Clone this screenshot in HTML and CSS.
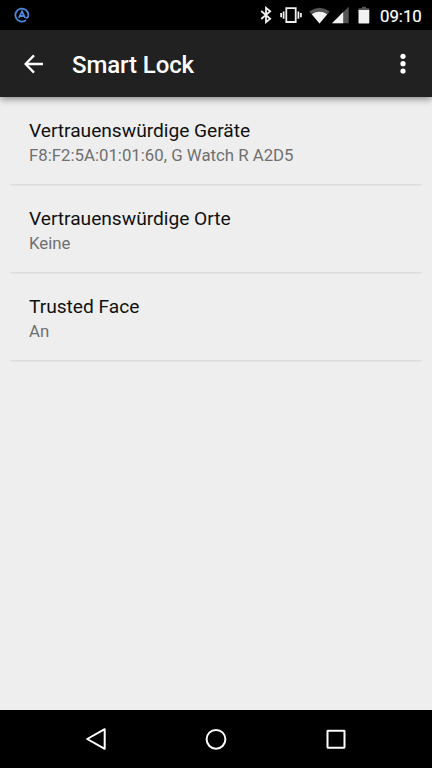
FILE: index.html
```html
<!DOCTYPE html>
<html lang="de">
<head>
<meta charset="utf-8">
<title>Smart Lock</title>
<link rel="stylesheet" href="styles.css">
</head>
<body>
<div class="status-bar">
  <svg class="notification" width="16" height="16" viewBox="0 0 16 16"><path d="M12 13.1A6.5 6.5 0 1 1 14.4 8.1C14.4 10.5 13 11 11.8 10.9M4.9 10.8L8 4.3L11.1 10.8M6 9H10"/></svg>
  <div class="status-icons">
    <svg width="12" height="18" viewBox="0 0 12 18"><path class="line" d="M1.2 5L10.2 12.8L6 16.2V1.8L10.2 5.2L1.2 13"/></svg>
    <svg class="vibrate" width="22" height="18" viewBox="0 0 22 18"><path class="line" d="M6.3 2.2H15.7V16H6.3ZM3.6 5.5V12.7M1.1 7V11.2M18.4 5.5V12.7M20.9 7V11.2"/></svg>
    <svg class="wifi" width="21" height="18" viewBox="0 0 21 18"><path class="dim" d="M.3 5.4Q10.5-1.7 20.7 5.4L10.5 17.5Z"/><path class="solid" d="M2.8 8.2Q10.5 3.4 18.2 8.2L10.5 17.5Z"/></svg>
    <svg class="signal" width="17" height="18" viewBox="0 0 17 18"><path class="dim" d="M0 17.3L16.7.8V17.3Z"/><path class="solid" d="M0 17.3L11.2 6.1V17.3Z"/></svg>
    <svg class="battery" width="12" height="18" viewBox="0 0 12 18"><path class="dim" d="M4 .7H8V2.3H11.3V5H.5V2.3H4Z"/><path class="solid" d="M.5 4H11.3V16.7Q11.3 17.4 10.6 17.4H1.2Q.5 17.4 .5 16.7Z"/></svg>
  </div>
  <span class="clock">09:10</span>
</div>
<header class="app-bar">
  <svg class="back" width="20" height="20" viewBox="0 0 20 20"><path d="M19 10H2M10 1.4L1.5 10L10 18.6"/></svg>
  <h1>Smart Lock</h1>
  <svg class="more" width="6" height="22" viewBox="0 0 6 22"><circle cx="3" cy="3.3" r="2.6"/><circle cx="3" cy="10.7" r="2.6"/><circle cx="3" cy="18" r="2.6"/></svg>
</header>
<main class="settings">
  <section class="item"><h2>Vertrauenswürdige Geräte</h2><p>F8:F2:5A:01:01:60, G Watch R A2D5</p></section>
  <section class="item"><h2>Vertrauenswürdige Orte</h2><p>Keine</p></section>
  <section class="item"><h2>Trusted Face</h2><p>An</p></section>
</main>
<nav class="nav-bar">
  <svg width="24" height="24" viewBox="0 0 24 24"><path d="M20.7 2.2V21.8L3.2 12Z"/></svg>
  <svg width="24" height="24" viewBox="0 0 24 24"><circle cx="12" cy="12.3" r="9.4"/></svg>
  <svg width="24" height="24" viewBox="0 0 24 24"><rect x="3.5" y="3.7" width="17" height="17" rx=".4"/></svg>
</nav>
</body>
</html>
```
FILE: styles.css
```css
* { box-sizing: border-box; }
body {
  margin: 0;
  width: 432px;
  height: 768px;
  display: flex;
  flex-direction: column;
  overflow: hidden;
  background: #eee;
  font-family: Roboto, sans-serif;
}
h1, h2, p { margin: 0; font-weight: 400; white-space: nowrap; }
svg { display: block; flex: none; }
.status-bar {
  height: 30px;
  flex: none;
  display: flex;
  align-items: center;
  padding: 0 10px 0 14px;
  background: #000;
  color: #fff;
}
.notification { fill: none; stroke: #4d87db; stroke-width: 1.8; }
.status-icons { display: flex; margin-left: auto; }
.line { fill: none; stroke: #eee; stroke-width: 1.8; }
.solid { fill: #f2f2f2; }
.dim { fill: #555; }
.vibrate { margin-left: 8px; }
.wifi { margin-left: 7px; }
.signal { margin-left: 2px; }
.battery { margin-left: 9px; }
.clock {
  width: 43px;
  margin-left: 10px;
  margin-right: -1px;
  padding-top: 1px;
  font-size: 16.8px;
  font-weight: 400;
  -webkit-text-stroke: .2px #fff;
  line-height: 20px;
}
.app-bar {
  position: relative;
  height: 67px;
  flex: none;
  display: flex;
  align-items: center;
  padding: 0 26px 0 24px;
  background: #212121;
  box-shadow: 0 2px 7px rgba(0, 0, 0, .45);
  color: #fff;
}
.back { fill: none; stroke: #fff; stroke-width: 2.3; }
.app-bar h1 {
  margin-left: 28px;
  padding-top: 2px;
  font-size: 24px;
  font-weight: 500;
  letter-spacing: -.1px;
  line-height: 30px;
}
.more { margin-left: auto; fill: #fff; }
.settings { flex: 1; padding: 0 10px; }
.item {
  height: 88px;
  padding: 21px 19px 0;
  box-shadow: 0 1px #e7e7e7, inset 0 -1px #dcdcdc;
}
.item h2 { color: #111; font-size: 19.2px; letter-spacing: -.03px; line-height: 25px; }
.item p { color: #707070; font-size: 16.8px; line-height: 24px; }
.nav-bar {
  height: 58px;
  flex: none;
  display: flex;
  justify-content: center;
  align-items: center;
  gap: 96px;
  background: #000;
}
.nav-bar svg { fill: none; stroke: #fff; stroke-width: 2; stroke-linejoin: round; }
```
